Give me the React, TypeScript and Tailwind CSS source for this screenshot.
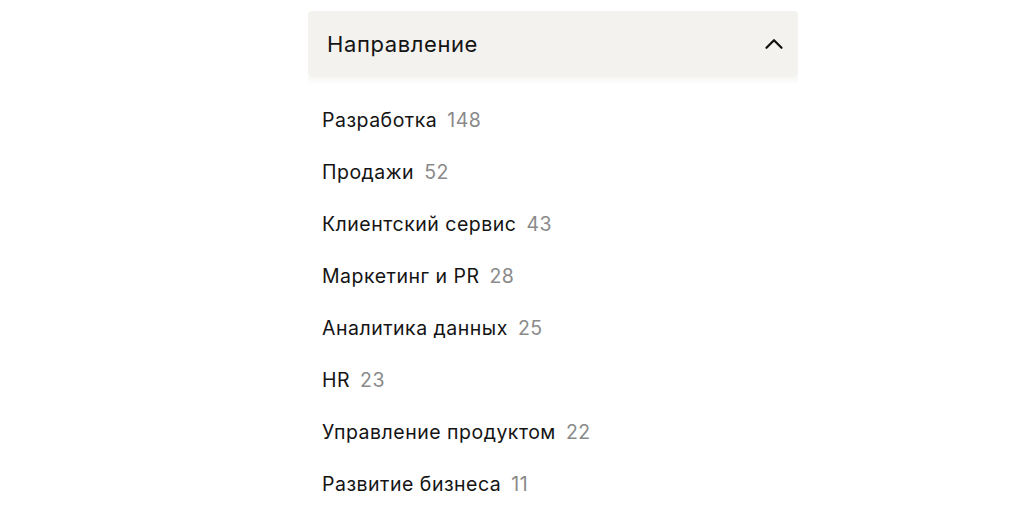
import { ChevronUp } from 'lucide-react';

const directions = [
    { name: 'Разработка', count: 148 },
    { name: 'Продажи', count: 52 },
    { name: 'Клиентский сервис', count: 43 },
    { name: 'Маркетинг и PR', count: 28 },
    { name: 'Аналитика данных', count: 25 },
    { name: 'HR', count: 23 },
    { name: 'Управление продуктом', count: 22 },
    { name: 'Развитие бизнеса', count: 11 },
];

export default function App() {
    return (
        <div className="min-h-screen bg-white font-['Inter',sans-serif] text-[#141414]">
            <div className="ml-[308px] w-[490px] pt-[11px]">
                {/* Шапка фильтра */}
                <button className="flex h-[66px] w-full items-center justify-between rounded-[4px] bg-[#f3f2ee] pl-[19px] pr-[9px] text-left">
                    <span className="text-[22px] tracking-[0.6px]">Направление</span>
                    <ChevronUp size={30} strokeWidth={1.8} className="text-[#111]" />
                </button>
                <div className="h-[8px] w-full bg-gradient-to-b from-[#f6f6f4] to-white" />

                {/* Список направлений */}
                <ul className="pt-[10px]">
                    {directions.map((d) => (
                        <li key={d.name} className="flex h-[52px] items-center pl-[14px] text-[19.5px] tracking-[0.5px]">
                            <span>{d.name}</span>
                            <span className="ml-[10px] text-[#8a8a8a]">{d.count}</span>
                        </li>
                    ))}
                </ul>
            </div>
        </div>
    );
}
